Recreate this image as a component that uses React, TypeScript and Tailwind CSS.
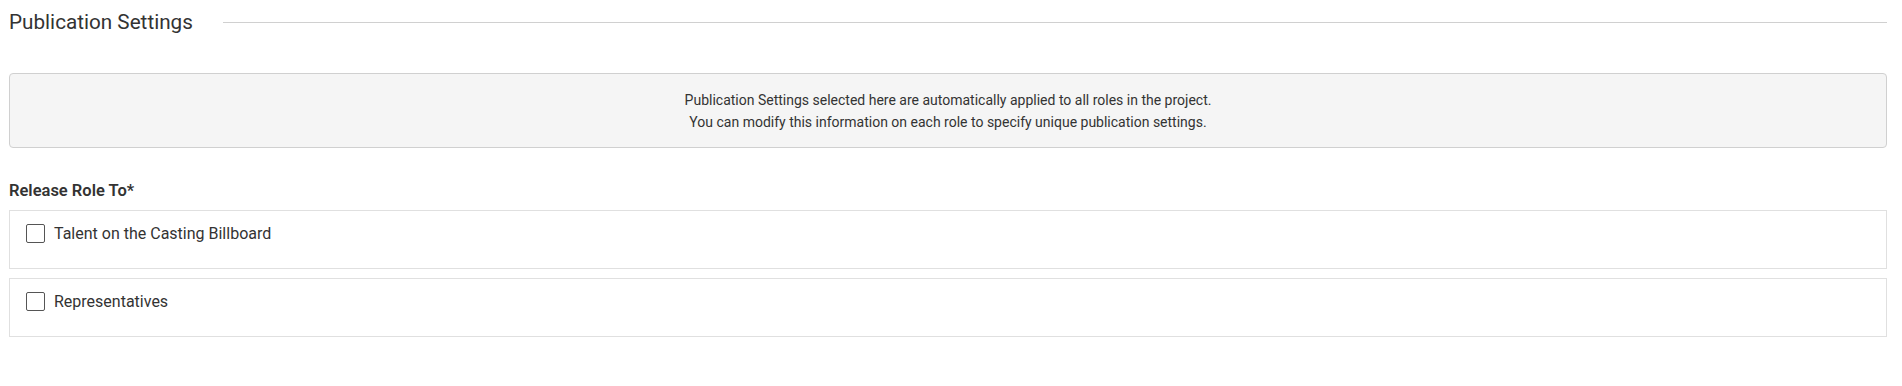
import { useState } from "react";

const options = [
  { id: "talent", label: "Talent on the Casting Billboard" },
  { id: "reps", label: "Representatives" },
];

function App() {
  const [checked, setChecked] = useState<Record<string, boolean>>({});

  const toggle = (id: string) => {
    setChecked(prev => ({ ...prev, [id]: !prev[id] }));
  };

  return (
    <div className="min-h-screen bg-white px-[9px] pt-[9px] text-[#333] font-['Roboto',sans-serif]">
      {/* HEADER */}
      <div className="flex items-center h-[26px]">
        <h2 className="text-[20.7px] leading-[26px] text-[#333] whitespace-nowrap">Publication Settings</h2>
        <div className="flex-1 ml-[30px] mr-[6px] h-px bg-[#d0d0d0]" />
      </div>

      {/* INFO */}
      <div className="mt-[38px] mr-[6px] h-[75px] rounded-[4px] border border-[#d0d0d0] bg-[#f5f5f5] flex flex-col items-center justify-center text-[14px] leading-[22px] text-[#333]">
        <p>Publication Settings selected here are automatically applied to all roles in the project.</p>
        <p>You can modify this information on each role to specify unique publication settings.</p>
      </div>

      {/* RELEASE */}
      <div className="mt-[32px] text-[16.5px] font-semibold leading-[22px] text-[#333]">Release Role To*</div>
      <div className="mt-[8px] mr-[6px] flex flex-col gap-[9px]">
        {options.map(opt => (
          <label
            key={opt.id}
            className="h-[59px] border border-[#e0e0e0] flex items-start px-4 pt-[13px] cursor-pointer"
          >
            <span
              onClick={() => toggle(opt.id)}
              className={
                checked[opt.id]
                  ? "w-[19px] h-[19px] border border-[#444] rounded-[2px] bg-[#444] shrink-0"
                  : "w-[19px] h-[19px] border border-[#555] rounded-[2px] bg-white shrink-0"
              }
            />
            <span className="ml-[9px] text-[16px] leading-[20px] text-[#333]">{opt.label}</span>
          </label>
        ))}
      </div>
    </div>
  );
}

export default App;
